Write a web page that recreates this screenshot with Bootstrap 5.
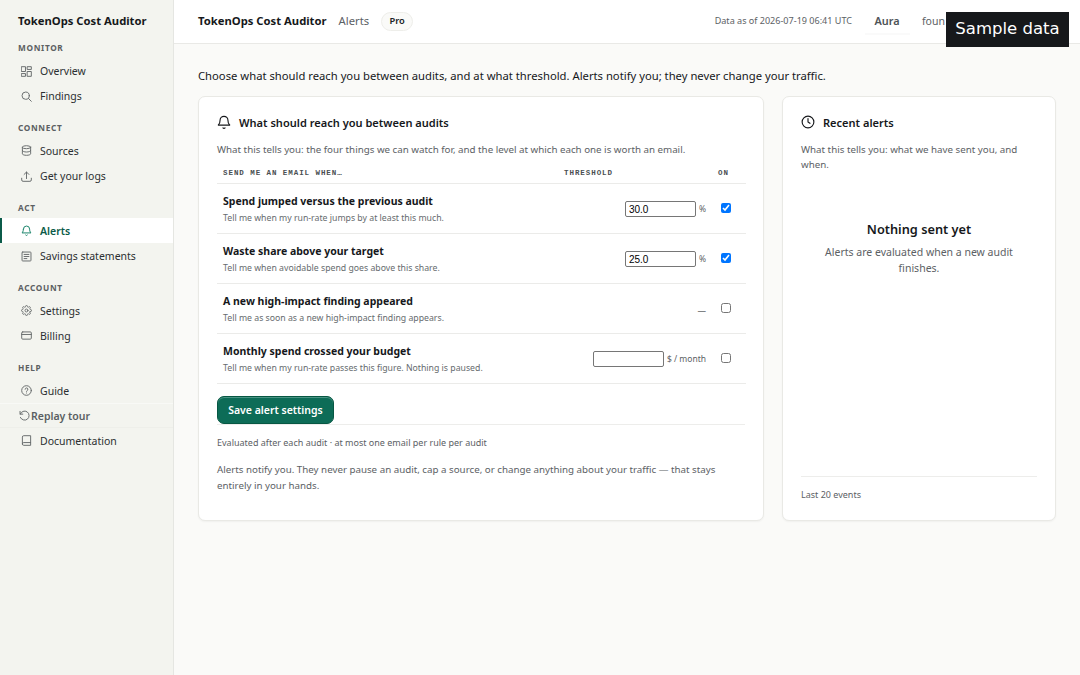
<!DOCTYPE html>
<html lang="en">
<head>
<meta charset="utf-8">
<meta name="viewport" content="width=device-width, initial-scale=1">
<title>TokenOps Cost Auditor</title>
<link href="https://cdn.jsdelivr.net/npm/bootstrap@5.3.0/dist/css/bootstrap.min.css" rel="stylesheet">
<style>
body{font-family:"Noto Sans",sans-serif;font-size:11.25px;line-height:1.4;background:#fafaf8;color:#16181b;height:675px;overflow:hidden}
svg{fill:none;stroke:currentColor;stroke-width:1.5;stroke-linecap:round;stroke-linejoin:round;flex:none}
.side{width:174px;background:#f3f4ef;border-right:1px solid #e5e6e2;flex:none;height:675px}
.side-brand{font-size:11.25px;font-weight:700;height:38px;padding:13px 0 0 18px;line-height:16px;white-space:nowrap}
.side-label{font-size:8.25px;font-weight:700;letter-spacing:.67px;color:#5c6062;height:20.5px;line-height:20px;padding-left:18px}
.side-group{margin-bottom:9px}
.side .nav-link{height:25.2px;padding:0 0 0 21px;gap:8px;color:#2b2f31;font-size:10.5px;line-height:16px}
.side .nav-link svg{width:11px;height:11px;color:#676b6c;stroke-width:1.4}
.side .nav-link.active{background:#fff;color:#0b5b49;font-weight:600;border-left:2px solid #0b5b49;padding-left:19px}
.side .nav-link.active svg{color:#138066}
.side .nav-link.replay{padding-left:19px;gap:1px;font-weight:600;color:#5a5f62;border-top:1px solid #f8f9f6;border-bottom:1px solid #eeefea}
.topbar{height:43.5px;background:#fff;border-bottom:1px solid #e9e9e6;padding:0 134px 0 24px;position:relative}
.top-brand{font-size:11.25px;font-weight:700}
.muted{color:#5c6165}
.plan{font-size:9.3px;font-weight:600;border:1px solid #eeeeea;background:#fafaf8;border-radius:10px;height:19px;width:32px;line-height:16px;text-align:center;color:#202326;margin-left:12px}
.sample{position:absolute;left:772px;top:12px;width:123px;height:35px;background:#16181b;color:#fff;font:16.5px/33px "DejaVu Sans",sans-serif;text-align:center;white-space:nowrap}
.asof{font-size:9.05px}
.account{width:45px;height:27px;line-height:26px;text-align:center;font-size:10.9px;font-weight:600;color:#4e5357;border-bottom:2px solid #fafafa;margin:0 12.5px}
.user{font-size:10.5px;width:24px;white-space:nowrap}
.intro{font-size:11.25px;line-height:16px;padding-top:24.5px;height:52.5px}
.panels{display:grid;grid-template-columns:566px 274px;gap:18px;height:425px}
.panel{background:#fff;border:1px solid #e9e9e5;border-radius:7px;padding:16.5px 18px 0;box-shadow:0 1px 2px #0000000b}
.panel h2{font-size:11.06px;line-height:17px;font-weight:600;margin:0}
.panel h2 svg{width:14px;height:14px;stroke-width:1.3}
.tells{font-size:9.75px;line-height:15.2px;color:#5c6165;margin:11px 0 0}
.tells.closing{line-height:15.75px;margin-top:13px}
.rules{width:529px;table-layout:fixed;margin:0;border-collapse:collapse}
.rules th{font:700 7.5px/11px "Liberation Mono",monospace;letter-spacing:.94px;color:#4a4f52;padding:11px 6px 4px;height:26.7px;vertical-align:top}
.rules tr{border-bottom:1px solid #ebebe9}
.rules td{height:50px;padding:8px 6px 0;vertical-align:top}
.rules td:first-child{padding-top:9px}
.rules td:last-child{padding:19px 0 0 8.5px}
.rule-name{font-weight:700;font-size:10.5px;line-height:17px}
.rule-desc{font-size:8.72px;line-height:13px;color:#666b6e;padding-top:2px}
.cell{display:flex;justify-content:flex-end;align-items:center;gap:3px;padding-top:9.5px;white-space:nowrap}
.unit{font-size:8.5px;color:#5c6164}
.no-limit{padding-top:4px;line-height:12px}
.limit{width:71px;height:16px;border:1px solid #767676;border-radius:2px;padding:0 3px;font:10px "Liberation Sans",sans-serif;color:#000;background:#fff}
.tick{width:10px;height:10px;margin:0;display:block}
.actions{padding-top:12px}
.save{background:#0d6c57;color:#fff;font-size:10.5px;font-weight:600;border:1px solid #075743;border-radius:7px;width:117px;height:28px;padding:0;line-height:26px;box-shadow:inset 0 1px #4a9484}
.save:hover{background:#0b5b49;color:#fff}
.rule-foot{border-top:1px solid #ededeb}
.foot-note{font-size:9px;line-height:13px;color:#5c6165}
.rules-note{padding-top:11px}
.events-note{padding:11px 0 19px}
.empty{padding:48px 16px 0}
.empty-title{font-size:12.75px;font-weight:600;line-height:18px}
.empty-text{font-size:10.5px;line-height:16px;color:#5c6165;padding-top:6px}
</style>
</head>
<body>
<div class="d-flex">
<aside class="side">
<div class="side-brand">TokenOps Cost Auditor</div>
<nav>
<div class="side-group"><div class="side-label">MONITOR</div>
<a class="nav-link d-flex align-items-center" href="#"><svg viewBox="0 0 16 16"><rect x="1" y="1" width="5.5" height="7"/><rect x="9.5" y="1" width="5.5" height="4"/><rect x="1" y="11" width="5.5" height="4"/><rect x="9.5" y="8" width="5.5" height="7"/></svg>Overview</a>
<a class="nav-link d-flex align-items-center" href="#"><svg viewBox="0 0 16 16"><circle cx="6.8" cy="6.8" r="5.3"/><path d="m10.8 10.8 4.2 4.2"/></svg>Findings</a></div>
<div class="side-group"><div class="side-label">CONNECT</div>
<a class="nav-link d-flex align-items-center" href="#"><svg viewBox="0 0 16 16"><ellipse cx="8" cy="3.2" rx="6" ry="2.2"/><path d="M2 3.2v9.6C2 14 4.7 15 8 15s6-1 6-2.2V3.2M2 8c0 1.2 2.7 2.2 6 2.2S14 9.2 14 8"/></svg>Sources</a>
<a class="nav-link d-flex align-items-center" href="#"><svg viewBox="0 0 16 16"><path d="M8 11V1.5M4.5 5 8 1.5 11.5 5M1 10.5V13q0 2 2 2h10q2 0 2-2v-2.5"/></svg>Get your logs</a></div>
<div class="side-group"><div class="side-label">ACT</div>
<a class="nav-link active d-flex align-items-center" href="#"><svg viewBox="0 0 16 16"><path d="M3.5 6a4.5 4.5 0 0 1 9 0c0 4 2 5.5 2 5.5h-13s2-1.5 2-5.5M6.8 14.7a1.5 1.5 0 0 0 2.4 0"/></svg>Alerts</a>
<a class="nav-link d-flex align-items-center" href="#"><svg viewBox="0 0 16 16"><rect x="1.5" y="1.5" width="13" height="13" rx="1"/><path d="M4.5 5h7M4.5 8h7M4.5 11h4"/></svg>Savings statements</a></div>
<div class="side-group"><div class="side-label">ACCOUNT</div>
<a class="nav-link d-flex align-items-center" href="#"><svg viewBox="0 0 24 24" style="stroke-width:2"><circle cx="12" cy="12" r="3.2"/><path d="M19.4 15a1.65 1.65 0 0 0 .33 1.82l.06.06a2 2 0 1 1-2.83 2.83l-.06-.06A1.65 1.65 0 0 0 14 21.1a2 2 0 1 1-4 0 1.65 1.65 0 0 0-2.9-1.45l-.06.06a2 2 0 1 1-2.83-2.83l.06-.06A1.65 1.65 0 0 0 3 14a2 2 0 1 1 0-4 1.65 1.65 0 0 0 1.27-2.82l-.06-.06a2 2 0 1 1 2.83-2.83l.06.06A1.65 1.65 0 0 0 10 3a2 2 0 1 1 4 0 1.65 1.65 0 0 0 2.9 1.35l.06-.06a2 2 0 1 1 2.83 2.83l-.06.06A1.65 1.65 0 0 0 21 10a2 2 0 1 1 0 4 1.65 1.65 0 0 0-1.6 1z"/></svg>Settings</a>
<a class="nav-link d-flex align-items-center" href="#"><svg viewBox="0 0 16 16"><rect x="1" y="2.8" width="14" height="10.5" rx="1.5"/><path d="M1 6.5h14"/></svg>Billing</a></div>
<div class="side-group"><div class="side-label">HELP</div>
<a class="nav-link d-flex align-items-center" href="#"><svg viewBox="0 0 16 16"><circle cx="8" cy="8" r="7"/><path d="M6 6.2a2 2 0 1 1 2.8 1.9Q8 8.5 8 9.3M8 11.6v.1"/></svg>Guide</a>
<a class="nav-link replay d-flex align-items-center" href="#"><svg viewBox="0 0 16 16"><path d="M1.5 2v4h4M1.8 6A6.6 6.6 0 1 1 2 10.8"/></svg>Replay tour</a>
<a class="nav-link d-flex align-items-center" href="#"><svg viewBox="0 0 16 16"><path d="M2 13V3q0-2 2-2h10v14H4q-2 0-2-2t2-2h10"/></svg>Documentation</a></div>
</nav>
</aside>
<main class="flex-grow-1">
<header class="topbar d-flex align-items-center">
<div class="top-brand">TokenOps Cost Auditor</div>
<div class="muted ms-2 ps-1">Alerts</div>
<div class="plan">Pro</div>
<div class="asof muted ms-auto">Data as of 2026-07-19 06:41 UTC</div>
<div class="account">Aura</div>
<div class="user muted">foun</div>
<div class="sample">Sample data</div>
</header>
<div class="px-4">
<div class="intro">Choose what should reach you between audits, and at what threshold. Alerts notify you; they never change your traffic.</div>
<div class="panels">
<section class="panel">
<h2 class="d-flex align-items-center gap-2"><svg viewBox="0 0 16 16"><path d="M3.5 6a4.5 4.5 0 0 1 9 0c0 4 2 5.5 2 5.5h-13s2-1.5 2-5.5M6.8 14.7a1.5 1.5 0 0 0 2.4 0"/></svg>What should reach you between audits</h2>
<p class="tells">What this tells you: the four things we can watch for, and the level at which each one is worth an email.</p>
<table class="rules">
<colgroup><col style="width:341px"><col style="width:154px"><col style="width:34px"></colgroup>
<thead><tr><th>SEND ME AN EMAIL WHEN…</th><th>THRESHOLD</th><th>ON</th></tr></thead>
<tbody>
<tr><td><div class="rule-name">Spend jumped versus the previous audit</div><div class="rule-desc">Tell me when my run-rate jumps by at least this much.</div></td><td><div class="cell"><input class="limit" value="30.0"><span class="unit">%</span></div></td><td><input type="checkbox" class="tick" checked></td></tr>
<tr><td><div class="rule-name">Waste share above your target</div><div class="rule-desc">Tell me when avoidable spend goes above this share.</div></td><td><div class="cell"><input class="limit" value="25.0"><span class="unit">%</span></div></td><td><input type="checkbox" class="tick" checked></td></tr>
<tr><td><div class="rule-name">A new high-impact finding appeared</div><div class="rule-desc">Tell me as soon as a new high-impact finding appears.</div></td><td><div class="cell"><span class="unit no-limit">—</span></div></td><td><input type="checkbox" class="tick"></td></tr>
<tr><td><div class="rule-name">Monthly spend crossed your budget</div><div class="rule-desc">Tell me when my run-rate passes this figure. Nothing is paused.</div></td><td><div class="cell"><input class="limit"><span class="unit">$ / month</span></div></td><td><input type="checkbox" class="tick"></td></tr>
</tbody>
</table>
<div class="actions"><button class="btn save d-block">Save alert settings</button></div>
<div class="rule-foot foot-note rules-note">Evaluated after each audit · at most one email per rule per audit</div>
<p class="tells closing">Alerts notify you. They never pause an audit, cap a source, or change anything about your traffic — that stays entirely in your hands.</p>
</section>
<section class="panel d-flex flex-column">
<h2 class="d-flex align-items-center gap-2"><svg viewBox="0 0 16 16"><circle cx="8" cy="8" r="6.7"/><path d="M8 4v4l2.2 1.5"/></svg>Recent alerts</h2>
<p class="tells">What this tells you: what we have sent you, and when.</p>
<div class="empty text-center"><div class="empty-title">Nothing sent yet</div><div class="empty-text">Alerts are evaluated when a new audit finishes.</div></div>
<div class="foot-note rule-foot events-note mt-auto">Last 20 events</div>
</section>
</div>
</div>
</main>
</div>
<script src="https://cdn.jsdelivr.net/npm/bootstrap@5.3.0/dist/js/bootstrap.bundle.min.js"></script>
</body>
</html>
